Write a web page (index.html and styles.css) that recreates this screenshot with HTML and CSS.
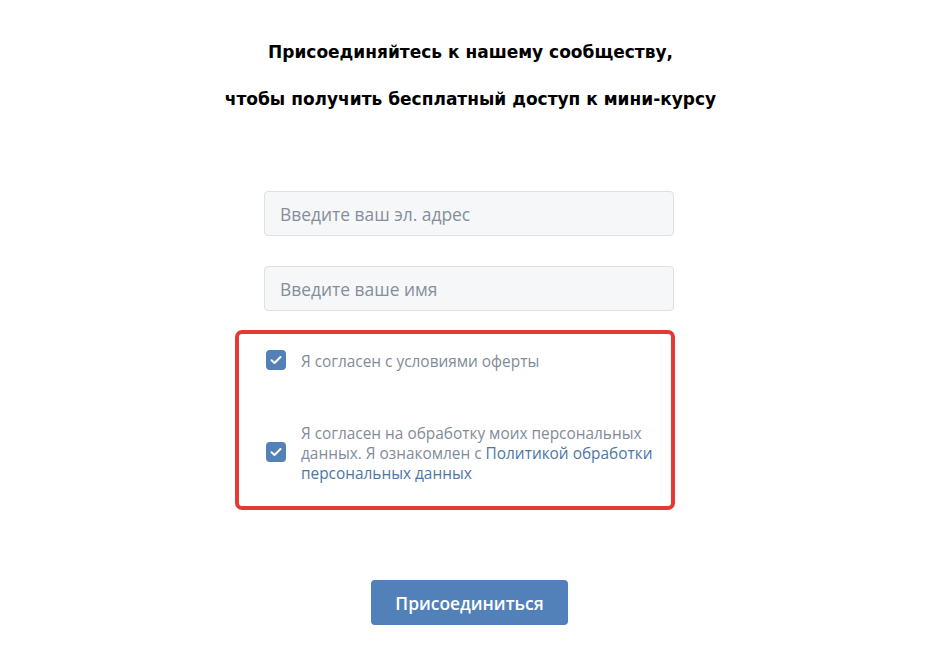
FILE: index.html
```html
<!DOCTYPE html>
<html lang="ru">
<head>
<meta charset="utf-8">
<link rel="stylesheet" href="styles.css">
</head>
<body>
<main class="page">
  <h1 class="title">Присоединяйтесь к нашему сообществу,</h1>
  <h1 class="title second">чтобы получить бесплатный доступ к мини-курсу</h1>
  <form class="form">
    <input class="field" type="text" placeholder="Введите ваш эл. адрес">
    <input class="field" type="text" placeholder="Введите ваше имя">
    <div class="agree">
      <label class="check">
        <span class="box"><svg width="12" height="10" viewBox="0 0 12 10"><path d="M1.5 5.2 L4.5 8 L10.5 2" fill="none" stroke="#fff" stroke-width="2" stroke-linecap="round" stroke-linejoin="round"/></svg></span>
        <span class="text">Я согласен с условиями оферты</span>
      </label>
      <label class="check">
        <span class="box"><svg width="12" height="10" viewBox="0 0 12 10"><path d="M1.5 5.2 L4.5 8 L10.5 2" fill="none" stroke="#fff" stroke-width="2" stroke-linecap="round" stroke-linejoin="round"/></svg></span>
        <span class="text">Я согласен на обработку моих персональных данных. Я ознакомлен с <a class="link" href="#">Политикой обработки персональных данных</a></span>
      </label>
    </div>
    <button class="submit" type="button">Присоединиться</button>
  </form>
</main>
</body>
</html>
```
FILE: styles.css
```css
html, body {
  margin: 0;
  padding: 0;
  background: #fff;
}
.page {
  width: 941px;
  display: flex;
  flex-direction: column;
  align-items: center;
  padding-top: 38px;
}
.title {
  margin: 0;
  font-family: "DejaVu Sans", Verdana, sans-serif;
  font-weight: bold;
  font-size: 17px;
  line-height: 28px;
  color: #000;
  text-align: center;
}
.title.second {
  margin-top: 19px;
}
.form {
  display: flex;
  flex-direction: column;
  align-items: flex-start;
  margin-top: 78px;
  margin-right: 3px;
  width: 410px;
}
.field {
  box-sizing: border-box;
  width: 410px;
  height: 45px;
  margin: 0 0 30px 0;
  padding: 0 15px;
  border: 1px solid #dce1e6;
  border-radius: 4px;
  background: #f5f7f9;
  font-family: "Open Sans", sans-serif;
  font-size: 17.4px;
  color: #000;
  outline: none;
}
.field::placeholder {
  color: #868e99;
}
.agree {
  box-sizing: border-box;
  width: 440px;
  margin: -11px 0 0 -29px;
  border: 4px solid #e53a32;
  border-radius: 7px;
  padding: 16px 8px 22px 27px;
  display: flex;
  flex-direction: column;
  gap: 50px;
}
.check {
  display: flex;
  align-items: center;
  gap: 15px;
  font-family: "Open Sans", sans-serif;
  font-size: 15.4px;
  line-height: 20px;
  color: #818c99;
}
.text {
  padding-top: 2px;
}
.box {
  flex: none;
  width: 20px;
  height: 20px;
  border-radius: 4px;
  background: #5181b8;
  display: flex;
  align-items: center;
  justify-content: center;
  margin-top: -3px;
}
.link {
  color: #4d76a6;
  text-decoration: none;
}
.submit {
  margin: 70px 0 0 107px;
  width: 197px;
  height: 45px;
  border: none;
  border-radius: 4px;
  background: #5181b8;
  color: #fff;
  font-family: "Open Sans", sans-serif;
  font-weight: 600;
  font-size: 17.4px;
}
```
